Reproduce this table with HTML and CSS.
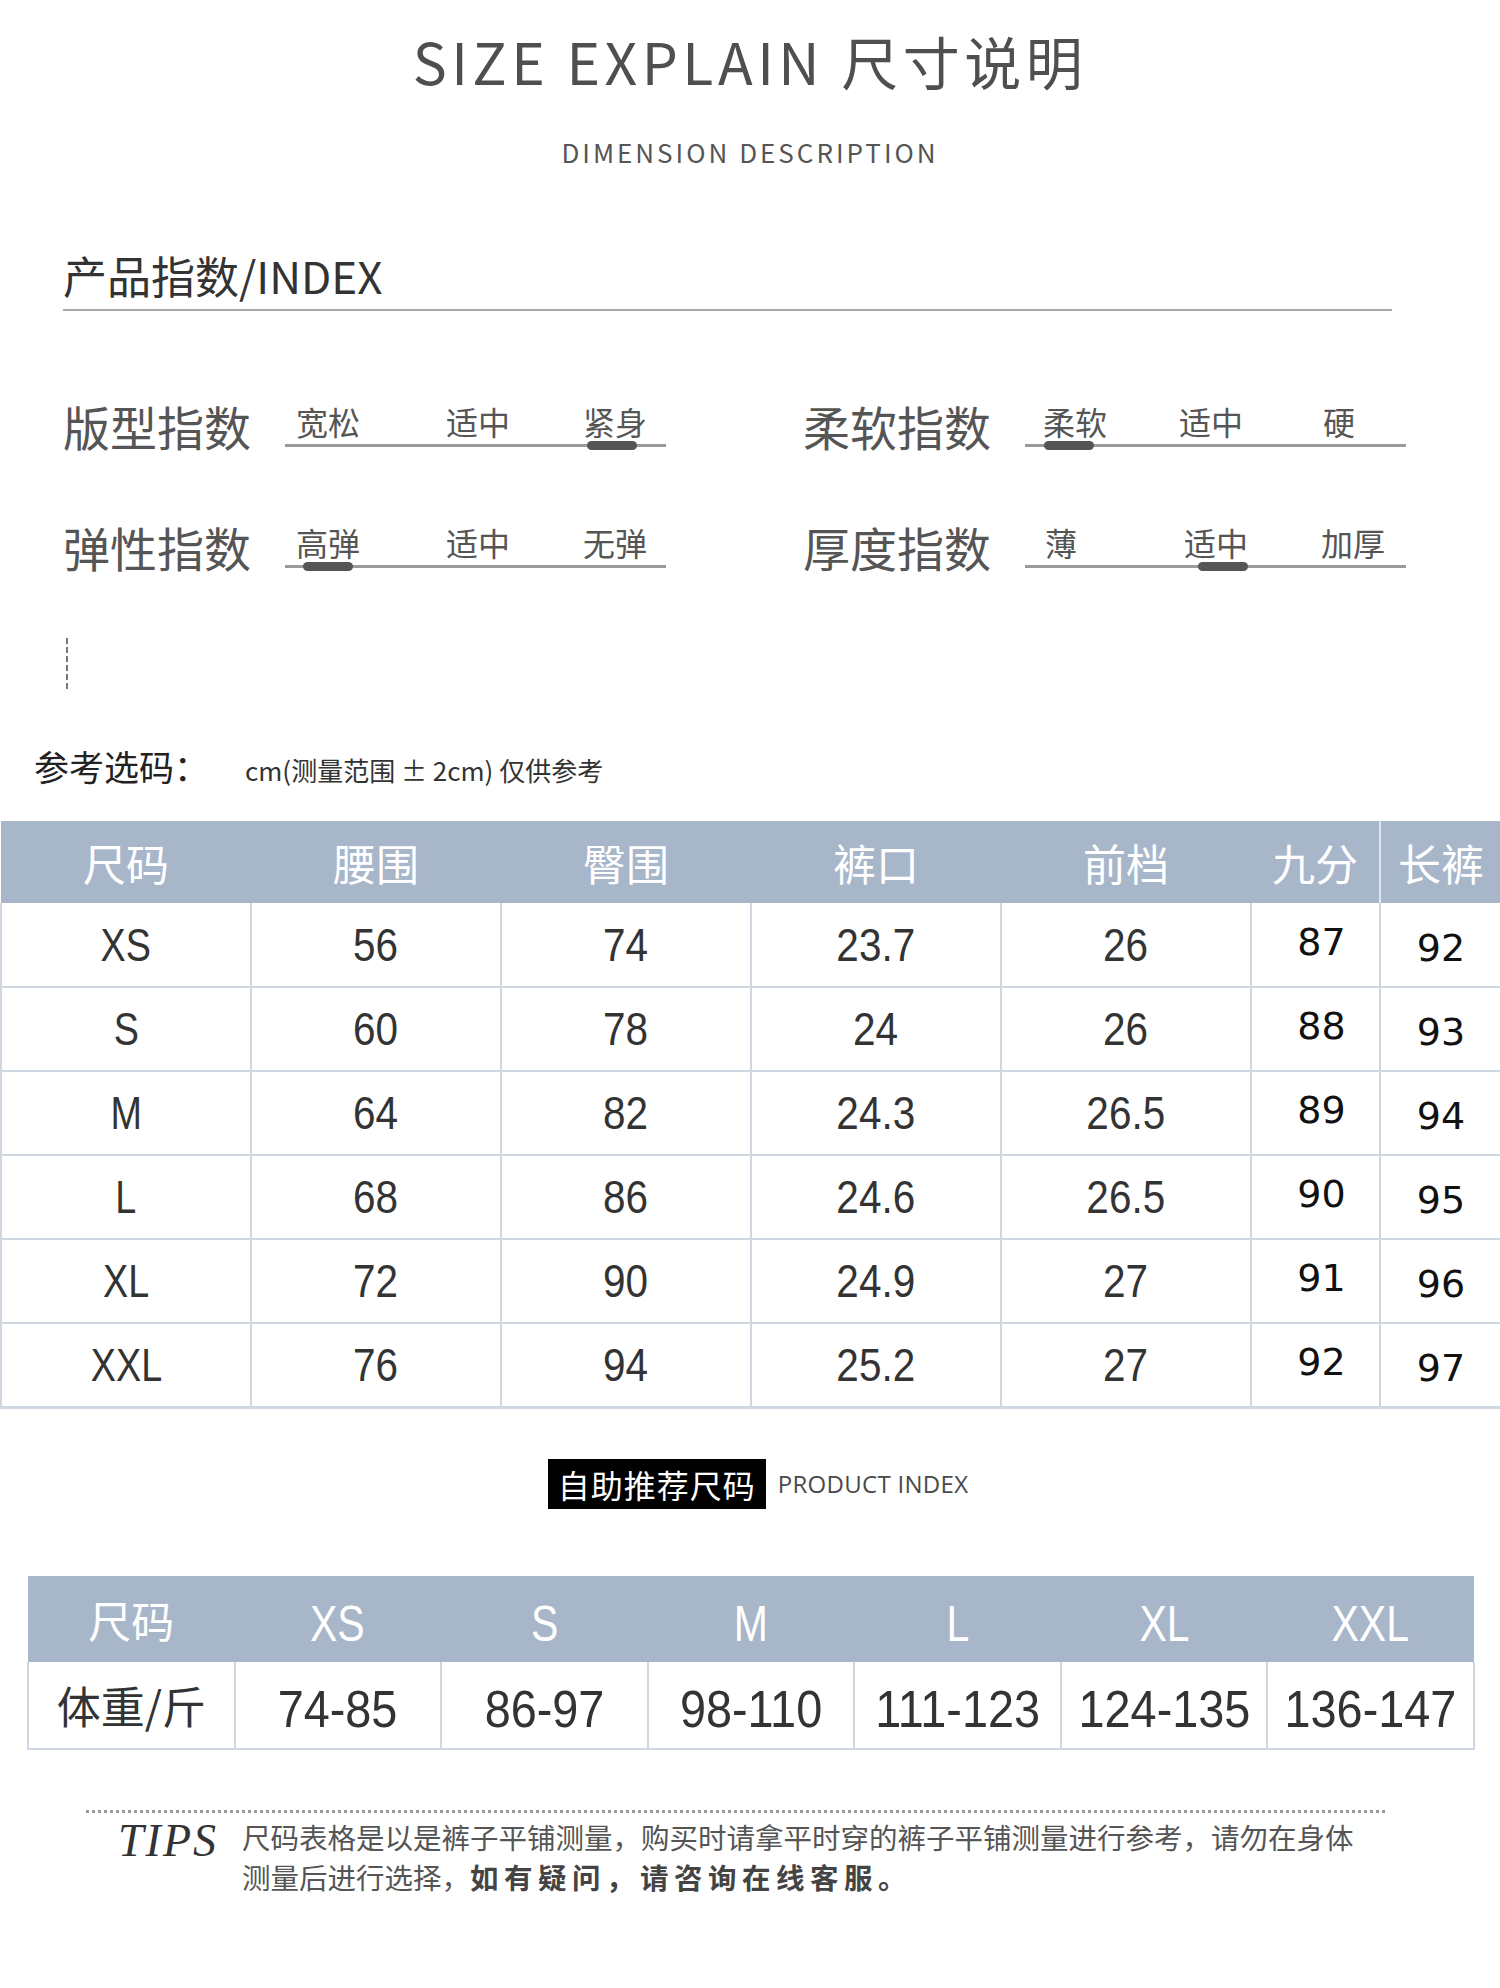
FILE: index.html
```html
<!DOCTYPE html>
<html lang="zh-CN">
<head>
<meta charset="utf-8">
<title>SIZE EXPLAIN 尺寸说明</title>
<link rel="stylesheet" href="styles.css">
</head>
<body>
<header class="head">
  <h1 class="title">SIZE EXPLAIN 尺寸说明</h1>
  <p class="subtitle">DIMENSION DESCRIPTION</p>
</header>

<section class="index">
  <h2 class="index-title">产品指数/INDEX</h2>
  <div class="index-grid">
    <div class="meter">
      <span class="meter-name">版型指数</span>
      <div class="scale s1">
        <span class="opt">宽松</span><span class="opt">适中</span><span class="opt">紧身</span>
        <i class="thumb" style="left:302px"></i>
      </div>
    </div>
    <div class="meter">
      <span class="meter-name">柔软指数</span>
      <div class="scale s2">
        <span class="opt">柔软</span><span class="opt">适中</span><span class="opt">硬</span>
        <i class="thumb" style="left:19px"></i>
      </div>
    </div>
    <div class="meter">
      <span class="meter-name">弹性指数</span>
      <div class="scale s1">
        <span class="opt">高弹</span><span class="opt">适中</span><span class="opt">无弹</span>
        <i class="thumb" style="left:18px"></i>
      </div>
    </div>
    <div class="meter">
      <span class="meter-name">厚度指数</span>
      <div class="scale s3">
        <span class="opt">薄</span><span class="opt">适中</span><span class="opt">加厚</span>
        <i class="thumb" style="left:173px"></i>
      </div>
    </div>
  </div>
</section>

<div class="dash-mark"></div>

<p class="ref">参考选码：<span class="ref-note">cm(测量范围 ± 2cm) 仅供参考</span></p>

<table class="size-table">
  <colgroup>
    <col class="c-w"><col class="c-w"><col class="c-w"><col class="c-w"><col class="c-w"><col class="c-nine"><col class="c-long">
  </colgroup>
  <thead>
    <tr><th>尺码</th><th>腰围</th><th>臀围</th><th>裤口</th><th>前档</th><th>九分</th><th class="h-long">长裤</th></tr>
  </thead>
  <tbody>
    <tr><td><span class="l">XS</span></td><td><span class="n">56</span></td><td><span class="n">74</span></td><td><span class="n">23.7</span></td><td><span class="n">26</span></td><td class="nine">87</td><td class="long">92</td></tr>
    <tr><td><span class="l">S</span></td><td><span class="n">60</span></td><td><span class="n">78</span></td><td><span class="n">24</span></td><td><span class="n">26</span></td><td class="nine">88</td><td class="long">93</td></tr>
    <tr><td><span class="l">M</span></td><td><span class="n">64</span></td><td><span class="n">82</span></td><td><span class="n">24.3</span></td><td><span class="n">26.5</span></td><td class="nine">89</td><td class="long">94</td></tr>
    <tr><td><span class="l">L</span></td><td><span class="n">68</span></td><td><span class="n">86</span></td><td><span class="n">24.6</span></td><td><span class="n">26.5</span></td><td class="nine">90</td><td class="long">95</td></tr>
    <tr><td><span class="l">XL</span></td><td><span class="n">72</span></td><td><span class="n">90</span></td><td><span class="n">24.9</span></td><td><span class="n">27</span></td><td class="nine">91</td><td class="long">96</td></tr>
    <tr><td><span class="l">XXL</span></td><td><span class="n">76</span></td><td><span class="n">94</span></td><td><span class="n">25.2</span></td><td><span class="n">27</span></td><td class="nine">92</td><td class="long">97</td></tr>
  </tbody>
</table>

<div class="badge-row">
  <span class="badge">自助推荐尺码</span>
  <span class="badge-en">PRODUCT INDEX</span>
</div>

<table class="weight-table">
  <thead>
    <tr><th class="cjk">尺码</th><th><span class="l">XS</span></th><th><span class="l">S</span></th><th><span class="l">M</span></th><th><span class="l">L</span></th><th><span class="l">XL</span></th><th><span class="l">XXL</span></th></tr>
  </thead>
  <tbody>
    <tr><td class="cjk">体重/斤</td><td><span class="n">74-85</span></td><td><span class="n">86-97</span></td><td><span class="n">98-110</span></td><td><span class="n">111-123</span></td><td><span class="n">124-135</span></td><td><span class="n">136-147</span></td></tr>
  </tbody>
</table>

<div class="dots"></div>

<div class="tips">
  <span class="tips-label">TIPS</span>
  <p class="tips-text">尺码表格是以是裤子平铺测量，购买时请拿平时穿的裤子平铺测量进行参考，请勿在身体<br>测量后进行选择，<b>如有疑问，请咨询在线客服。</b></p>
</div>
</body>
</html>
```

FILE: styles.css
```css
* { box-sizing: border-box; }

html, body {
  margin: 0;
  padding: 0;
  background: #fff;
}

body {
  width: 1500px;
  font-family: "Noto Sans CJK SC", "Noto Sans", sans-serif;
  color: #333;
}

/* ---------- heading ---------- */
.head {
  display: flex;
  flex-direction: column;
  align-items: center;
  padding-top: 26px;
}

.title {
  margin: 0;
  font-size: 57px;
  line-height: 68px;
  font-weight: 400;
  letter-spacing: 4.5px;
  color: #4f4f4f;
}

.subtitle {
  margin: 42px 0 0;
  font-size: 26px;
  line-height: 32px;
  letter-spacing: 3px;
  color: #555;
}

/* ---------- product index ---------- */
.index {
  padding-left: 63px;
  margin-top: 81px;
}

.index-title {
  margin: 0;
  width: 1329px;
  font-size: 44px;
  line-height: 52px;
  font-weight: 400;
  color: #333;
  padding-bottom: 8px;
  border-bottom: 2px solid #a8a8a8;
}

.index-grid {
  display: grid;
  grid-template-columns: 603px 603px;
  column-gap: 137px;
  row-gap: 65px;
  margin-top: 87px;
}

.meter {
  display: flex;
  height: 56px;
}

.meter-name {
  width: 222px;
  font-size: 47px;
  line-height: 56px;
  color: #555;
}

.scale {
  position: relative;
  width: 381px;
  height: 49px;
  display: flex;
  align-items: flex-start;
  padding-top: 5px;
  border-bottom: 3px solid #9a9a9a;
}

.opt {
  font-size: 32px;
  line-height: 36px;
  color: #555;
}

.s1 { padding-left: 11px; }
.s1 .opt:nth-child(1) { width: 150px; }
.s1 .opt:nth-child(2) { width: 137px; }

.s2 { padding-left: 18px; }
.s2 .opt:nth-child(1) { width: 136px; }
.s2 .opt:nth-child(2) { width: 144px; }

.s3 { padding-left: 20px; }
.s3 .opt:nth-child(1) { width: 139px; }
.s3 .opt:nth-child(2) { width: 137px; }

.thumb {
  position: absolute;
  bottom: -6px;
  width: 50px;
  height: 9px;
  border-radius: 5px;
  background: #555;
}

/* ---------- reference line ---------- */
.dash-mark {
  margin: 63px 0 0 66px;
  width: 0;
  height: 51px;
  border-left: 2px dashed #777;
}

.ref {
  margin: 55px 0 0 34px;
  font-size: 35px;
  line-height: 44px;
  color: #222;
  display: flex;
  align-items: baseline;
}

.ref-note {
  margin-left: 36px;
  font-size: 26px;
  color: #333;
}

/* ---------- condensed glyphs ---------- */
.n, .l {
  display: inline-block;
  font-family: "Liberation Sans", sans-serif;
}
.n { transform: scaleX(0.88); }
.l { transform: scaleX(0.82); }

/* ---------- size table ---------- */
.size-table {
  margin-top: 29px;
  width: 1500px;
  border-collapse: collapse;
  table-layout: fixed;
}

.c-w { width: 250px; }
.c-nine { width: 129px; }
.c-long { width: 121px; }

.size-table th {
  height: 82px;
  padding: 0;
  background: #a8b6ca;
  color: #fff;
  font-size: 43px;
  font-weight: 400;
  text-align: center;
}

.size-table th.h-long { border-left: 2px solid #dfe5ee; }

.size-table td {
  height: 84px;
  padding: 0;
  text-align: center;
  border: 2px solid #cfd7e2;
  border-top: 0;
  font-family: "Liberation Sans", sans-serif;
  font-size: 46px;
  color: #333;
}

.size-table td:last-child { border-right: 0; }
.size-table tbody tr:last-child td { border-bottom-width: 3px; }

.size-table td.nine,
.size-table td.long {
  font-family: "DejaVu Sans", sans-serif;
  font-size: 38px;
  color: #111;
}

.size-table td.nine { padding: 0 0 6px 12px; }
.size-table td.long { padding-top: 6px; }

/* ---------- badge ---------- */
.badge-row {
  display: flex;
  justify-content: center;
  align-items: center;
  gap: 12px;
  margin-top: 50px;
  padding-left: 16px;
}

.badge {
  background: #000;
  color: #fff;
  font-size: 32px;
  line-height: 50px;
  letter-spacing: 1px;
  padding: 0 10px;
}

.badge-en {
  font-family: "Open Sans", "Noto Sans", sans-serif;
  font-size: 24px;
  letter-spacing: 0.3px;
  color: #4a4a4a;
}

/* ---------- weight table ---------- */
.weight-table {
  margin: 67px 0 0 27px;
  width: 1448px;
  border-collapse: collapse;
  table-layout: fixed;
}

.weight-table th {
  height: 86px;
  padding: 0;
  background: #a8b6ca;
  color: #fff;
  font-size: 50px;
  font-weight: 400;
  text-align: center;
}

.weight-table td {
  height: 87px;
  padding: 0;
  text-align: center;
  border: 2px solid #cfd7e2;
  border-top: 0;
  font-size: 52px;
  color: #333;
}

.weight-table td .n { transform: scaleX(0.9); }

.weight-table .cjk {
  font-family: "Noto Sans CJK SC", sans-serif;
  font-size: 44px;
}

.weight-table th.cjk { font-size: 43px; }

/* ---------- tips ---------- */
.dots {
  margin: 60px 0 0 86px;
  width: 1299px;
  border-top: 3px dotted #999;
}

.tips {
  display: flex;
  align-items: flex-start;
  gap: 24px;
  margin: 4px 0 0 118px;
}

.tips-label {
  font-family: "Liberation Serif", serif;
  font-style: italic;
  font-size: 46px;
  line-height: 48px;
  letter-spacing: 2px;
  color: #333;
}

.tips-text {
  margin: 0;
  font-size: 28.5px;
  line-height: 40px;
  color: #555;
}

.tips-text b {
  font-weight: 700;
  letter-spacing: 5.5px;
  color: #444;
}
```
